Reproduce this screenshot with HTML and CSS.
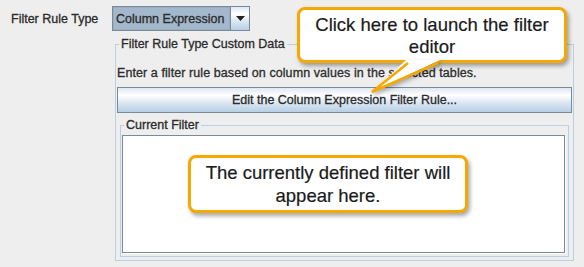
FILE: index.html
```html
<!DOCTYPE html>
<html>
<head>
<meta charset="utf-8">
<link rel="stylesheet" href="styles.css">
</head>
<body>
<div class="page">
  <div class="type-row">
    <span class="type-label">Filter Rule Type</span>
    <div class="combo">
      <span class="combo-value">Column Expression</span>
      <span class="combo-btn"><svg width="9" height="5" viewBox="0 0 9 5"><polygon points="0,0 9,0 4.5,5" fill="#222"/></svg></span>
    </div>
  </div>

  <fieldset class="group">
    <legend class="group-title">Filter Rule Type Custom Data</legend>
    <p class="hint">Enter a filter rule based on column values in the selected tables.</p>
    <div class="edit-btn">Edit the Column Expression Filter Rule...</div>
    <fieldset class="group inner">
      <legend class="group-title">Current Filter</legend>
      <div class="filter-area"></div>
    </fieldset>
  </fieldset>

  <div class="callout callout-top">Click here to launch the filter<br>editor</div>
  <svg class="callout-tail" width="90" height="50" viewBox="0 0 90 50">
    <polygon points="46,8 12,40 80,8" fill="#fff"/>
    <polyline points="48,11 12,40 78,11" fill="none" stroke="#f6a800" stroke-width="2.5" stroke-linejoin="miter"/>
  </svg>
  <div class="callout callout-bottom">The currently defined filter will<br>appear here.</div>
</div>
</body>
</html>
```

FILE: styles.css
```css
html, body {
  margin: 0;
  padding: 0;
  background: #eeeeee;
}

.page {
  position: relative;
  width: 584px;
  height: 267px;
  overflow: hidden;
  font-family: "Liberation Sans", Arial, sans-serif;
  font-size: 12.5px;
  color: #2b2b2b;
  -webkit-text-stroke: 0.3px #2b2b2b;
}

.type-row {
  display: flex;
  align-items: center;
  padding: 6px 0 0 11px;
  height: 25px;
}

.type-label {
  width: 101px;
}

.combo {
  box-sizing: border-box;
  display: flex;
  width: 138px;
  height: 25px;
  border: 1px solid #7a8a99;
  background: #a3b8cc;
}

.combo-value {
  flex: 1;
  display: flex;
  align-items: center;
  padding-left: 2px;
  border: 1px solid #98adc2;
}

.combo-btn {
  box-sizing: border-box;
  width: 19px;
  display: flex;
  align-items: center;
  justify-content: center;
  border-left: 1px solid #7a8a99;
  background: linear-gradient(#dde8f3 0%, #ffffff 30%, #dde8f3 60%, #b8cfe5 100%);
}

.group {
  box-sizing: border-box;
  min-width: 0;
  width: 459px;
  margin: 6px 0 0 115px;
  padding: 0 1px 3px 1px;
  border: 1px solid #b8cfe5;
}

.group-title {
  margin-left: 2px;
  padding: 0 2px;
  line-height: 14px;
}

.hint {
  margin: 15px 0 0 0;
  line-height: 14px;
  letter-spacing: 0.08px;
}

.edit-btn {
  box-sizing: border-box;
  height: 26px;
  margin-top: 7px;
  border: 1px solid #7a8a99;
  display: flex;
  align-items: center;
  justify-content: center;
  background: linear-gradient(#dde8f3 0%, #ffffff 30%, #dde8f3 60%, #b8cfe5 100%);
}

.group.inner {
  width: auto;
  margin: 5px 3px 0 3px;
  padding: 0 3px 3px 1px;
}

.filter-area {
  box-sizing: border-box;
  height: 118px;
  margin-top: 3px;
  background: #ffffff;
  border: 1px solid #7a8a99;
  box-shadow: 1px 1px 0 #ffffff;
}

.callout {
  position: absolute;
  box-sizing: border-box;
  background: #ffffff;
  border: 3px solid #f6a800;
  border-radius: 8px;
  box-shadow: 2px 3px 4px rgba(0, 0, 0, 0.35);
  text-align: center;
  font-family: "Liberation Sans", Arial, sans-serif;
  font-size: 18.5px;
  color: #1a1a1a;
  -webkit-text-stroke: 0.2px #1a1a1a;
}

.callout-top {
  left: 297px;
  top: 7px;
  width: 270px;
  height: 56px;
  padding-top: 4px;
  line-height: 22px;
}

.callout-tail {
  position: absolute;
  left: 360px;
  top: 52px;
  filter: drop-shadow(2px 2px 2px rgba(0, 0, 0, 0.3));
}

.callout-bottom {
  left: 188px;
  top: 155px;
  width: 280px;
  height: 58px;
  padding-top: 3px;
  line-height: 23px;
}
```
